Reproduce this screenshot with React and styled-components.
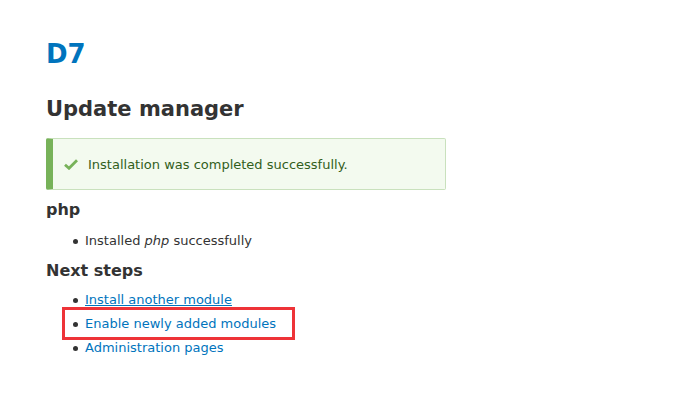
import React from "react";
import styled, { createGlobalStyle } from "styled-components";

const Global = createGlobalStyle`
  html, body { margin: 0; padding: 0; background: #fff; }
  body { font-family: "DejaVu Sans", sans-serif; color: #333; }
`;

const Page = styled.div`
  padding: 34px 46px 0 46px;
  width: 400px;
`;

const SiteName = styled.h1`
  margin: 0;
  font-size: 26px;
  line-height: 40px;
  font-weight: bold;
  color: #0074bd;
`;

const Title = styled.h2`
  margin: 20px 0 0;
  font-size: 21px;
  line-height: 30px;
  font-weight: bold;
  color: #333;
`;

const Message = styled.div`
  margin-top: 14px;
  box-sizing: border-box;
  height: 52px;
  display: flex;
  align-items: center;
  gap: 10px;
  padding-left: 11px;
  background: #f3faef;
  border: 1px solid #c9e1bd;
  border-left: 7px solid #77b259;
  border-radius: 2px;
  color: #325e1c;
  font-size: 13px;
`;

const SectionHeading = styled.h3`
  margin: ${(p) => p.$top}px 0 0;
  font-size: 16px;
  line-height: 22px;
  font-weight: bold;
  color: #333;
`;

const List = styled.ul`
  margin: ${(p) => p.$top}px 0 0;
  padding: 0 0 0 39px;
  font-size: 13px;
  line-height: 24px;
  list-style: none;
`;

const Item = styled.li`
  position: relative;
  height: 24px;
  &::before {
    content: "";
    position: absolute;
    left: -12px;
    top: 10px;
    width: 5px;
    height: 5px;
    border-radius: 50%;
    background: #333;
  }
`;

const Link = styled.a`
  color: #0074bd;
  text-decoration: ${(p) => (p.$underline ? "underline" : "none")};
`;

const Highlight = styled.span`
  position: absolute;
  left: -23px;
  top: -5px;
  width: 233px;
  height: 33px;
  box-sizing: border-box;
  border: 3px solid #ee3338;
  pointer-events: none;
`;

const Check = () => (
  <svg width="14" height="11" viewBox="0 0 14 11" aria-hidden="true">
    <path d="M1 5.8 L5 9.3 L13 1.2" fill="none" stroke="#77b259" strokeWidth="2.8" />
  </svg>
);

export default function App() {
  return (
    <>
      <Global />
      <Page>
        <SiteName>D7</SiteName>
        <Title>Update manager</Title>
        <Message>
          <Check />
          <span>Installation was completed successfully.</span>
        </Message>
        <SectionHeading $top={9}>php</SectionHeading>
        <List $top={8}>
          <Item>
            Installed <em>php</em> successfully
          </Item>
        </List>
        <SectionHeading $top={7}>Next steps</SectionHeading>
        <List $top={6}>
          <Item>
            <Link href="#" $underline>Install another module</Link>
          </Item>
          <Item>
            <Highlight />
            <Link href="#">Enable newly added modules</Link>
          </Item>
          <Item>
            <Link href="#">Administration pages</Link>
          </Item>
        </List>
      </Page>
    </>
  );
}
